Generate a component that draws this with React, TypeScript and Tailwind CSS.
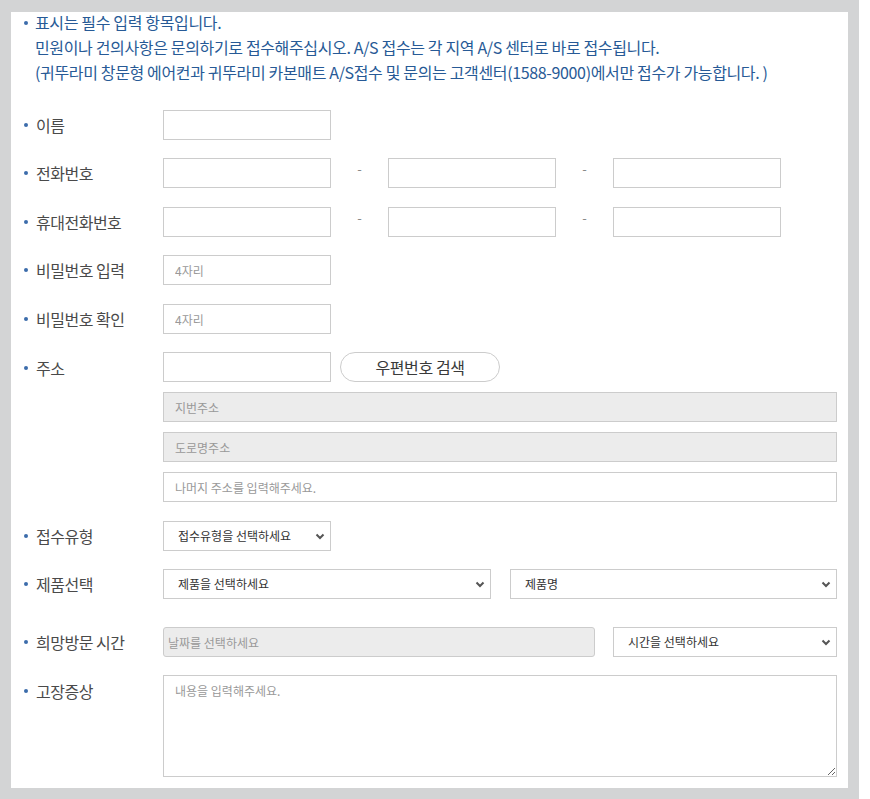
import type { ReactNode } from 'react'

const font = { fontFamily: '"Noto Sans CJK KR", "Noto Sans", sans-serif' }

function Row({ label, top, children }: { label: string; top?: boolean; children: ReactNode }) {
  return (
    <div className={`flex ${top ? 'items-start' : 'items-center'}`}>
      <div
        className={`flex w-[139px] shrink-0 items-center text-[16px] tracking-[-0.5px] text-[#4a4a4a] ${top ? 'mt-[4px]' : ''}`}
      >
        <span className="h-[4px] w-[4px] rounded-full bg-[#3b6cab]" />
        <span className="ml-[8px]">{label}</span>
      </div>
      {children}
    </div>
  )
}

const box = 'h-[30px] border border-[#ccc] px-[11px] text-[12px] text-[#333] placeholder:text-[#999] outline-none'

function Select({ text, className }: { text: string; className: string }) {
  return (
    <div className={`relative h-[30px] ${className}`}>
      <select className="h-full w-full appearance-none border border-[#ccc] bg-white pl-[14px] text-[12px] text-[#333] outline-none">
        <option>{text}</option>
      </select>
      <svg
        className="pointer-events-none absolute right-[6px] top-[12px]"
        width="10"
        height="7"
        viewBox="0 0 10 7"
      >
        <path d="M1.5 1.5l3.5 3.5 3.5-3.5" stroke="#555" strokeWidth="2" fill="none" />
      </svg>
    </div>
  )
}

function Dash() {
  return <span className="w-[57px] -translate-y-[4px] text-center text-[13px] text-[#888]">-</span>
}

export default function App() {
  return (
    <div style={font} className="min-h-[799px] bg-white">
      <div className="w-[859px] border-[11px] border-t-[12px] border-[#d3d4d5] bg-white pb-[11px] pr-[11px] pl-[13px]">
        <div className="-mt-[2px] flex text-[16px] leading-[25px] tracking-[-0.35px] text-[#275a96]">
          <span className="mt-[11px] h-[4px] w-[4px] shrink-0 rounded-full bg-[#3b6cab]" />
          <div className="ml-[7px]">
            <p>표시는 필수 입력 항목입니다.</p>
            <p>민원이나 건의사항은 문의하기로 접수해주십시오. A/S 접수는 각 지역 A/S 센터로 바로 접수됩니다.</p>
            <p>(귀뚜라미 창문형 에어컨과 귀뚜라미 카본매트 A/S접수 및 문의는 고객센터(1588-9000)에서만 접수가 가능합니다. )</p>
          </div>
        </div>

        <div className="mt-[25px] flex flex-col">
          <Row label="이름">
            <input className={`${box} w-[168px] bg-white`} />
          </Row>
          <div className="h-[18px]" />
          <Row label="전화번호">
            <input className={`${box} w-[168px] bg-white`} />
            <Dash />
            <input className={`${box} w-[168px] bg-white`} />
            <Dash />
            <input className={`${box} w-[168px] bg-white`} />
          </Row>
          <div className="h-[19px]" />
          <Row label="휴대전화번호">
            <input className={`${box} w-[168px] bg-white`} />
            <Dash />
            <input className={`${box} w-[168px] bg-white`} />
            <Dash />
            <input className={`${box} w-[168px] bg-white`} />
          </Row>
          <div className="h-[18px]" />
          <Row label="비밀번호 입력">
            <input className={`${box} w-[168px] bg-white`} placeholder="4자리" />
          </Row>
          <div className="h-[19px]" />
          <Row label="비밀번호 확인">
            <input className={`${box} w-[168px] bg-white`} placeholder="4자리" />
          </Row>
          <div className="h-[18px]" />
          <Row label="주소" top>
            <div className="flex flex-1 flex-col gap-[10px]">
              <div className="flex items-center">
                <input className={`${box} w-[168px] bg-white`} />
                <button className="ml-[9px] h-[30px] w-[160px] rounded-full border border-[#ccc] bg-white text-[16px] tracking-[-0.4px] text-[#3a3a3a]">
                  우편번호 검색
                </button>
              </div>
              <input className={`${box} w-full bg-[#ececec]`} placeholder="지번주소" readOnly />
              <input className={`${box} w-full bg-[#ececec]`} placeholder="도로명주소" readOnly />
              <input className={`${box} w-full bg-white`} placeholder="나머지 주소를 입력해주세요." />
            </div>
          </Row>
          <div className="h-[19px]" />
          <Row label="접수유형">
            <Select text="접수유형을 선택하세요" className="w-[168px]" />
          </Row>
          <div className="h-[18px]" />
          <Row label="제품선택">
            <Select text="제품을 선택하세요" className="w-[328px]" />
            <div className="w-[19px]" />
            <Select text="제품명" className="flex-1" />
          </Row>
          <div className="h-[28px]" />
          <Row label="희망방문 시간">
            <input
              className="h-[30px] w-[432px] rounded-[3px] border border-[#ccc] bg-[#ececec] px-[4px] text-[12px] text-[#333] outline-none placeholder:text-[#999]"
              placeholder="날짜를 선택하세요"
              readOnly
            />
            <div className="w-[18px]" />
            <Select text="시간을 선택하세요" className="flex-1" />
          </Row>
          <div className="h-[18px]" />
          <Row label="고장증상" top>
            <textarea
              className="h-[102px] flex-1 border border-[#ccc] bg-white px-[11px] py-[6px] text-[12px] text-[#333] outline-none placeholder:text-[#999]"
              placeholder="내용을 입력해주세요."
            />
          </Row>
        </div>
      </div>
    </div>
  )
}
